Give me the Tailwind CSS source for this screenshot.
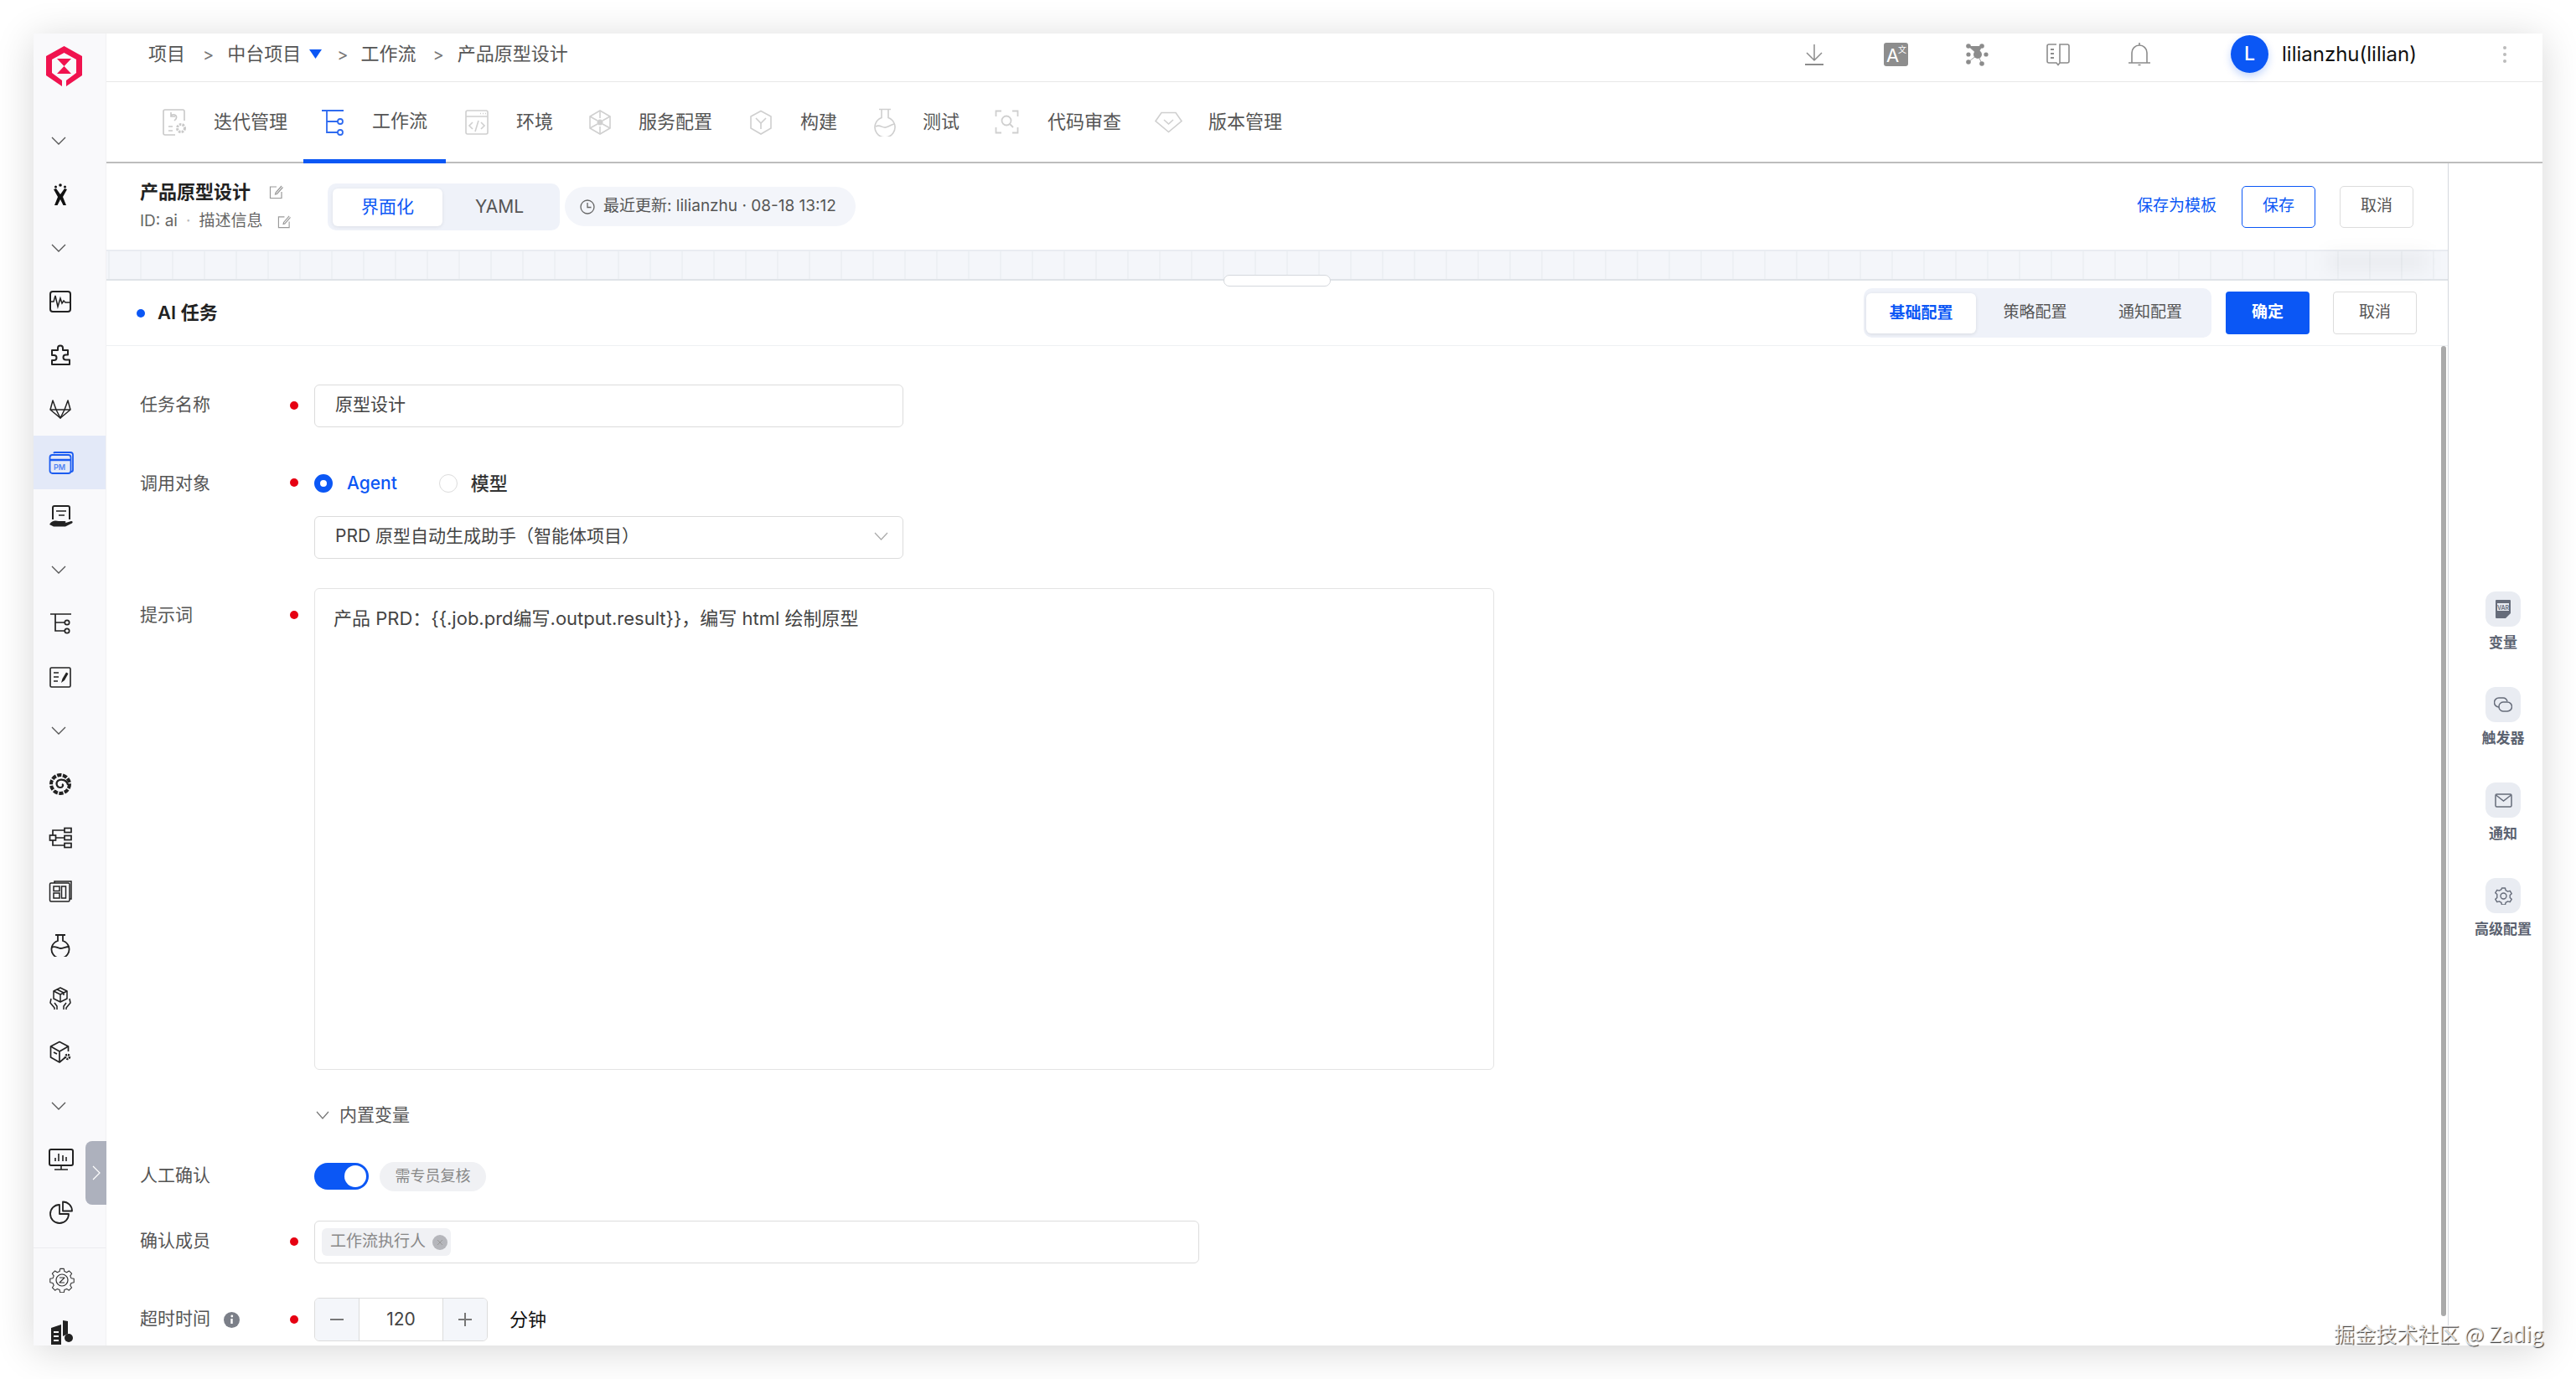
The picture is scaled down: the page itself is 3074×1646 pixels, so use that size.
<!DOCTYPE html>
<html lang="zh-CN">

<head>
    <meta charset="UTF-8">
    <title>产品原型设计 - 工作流</title>
    <script src="https://cdn.jsdelivr.net/npm/@tailwindcss/browser@4"></script>
</head>

<body class="bg-white h-[1646px] overflow-hidden pt-[40px] pl-[40px] font-['Inter','Noto_Sans_CJK_SC',sans-serif]">
    <div class="relative flex w-[2994px] h-[1566px] bg-white shadow-[0_6px_44px_rgba(0,0,0,0.16)]">

        <!-- Sidebar -->
        <aside class="relative w-[87px] shrink-0 bg-[#f9f9fb] border-r border-[#f1f1f3] flex flex-col overflow-hidden text-[#222]">
            <div class="h-[96px] shrink-0 pl-[15px] pt-[15px]">
                <svg class="w-[43px] h-[48px]" viewBox="0 0 43 48" fill="none">
                    <path d="M21.500 0 43 12V35L24 48V41L36 32V16L21.500 8 7 16V32L19 41V48L0 35V12Z" fill="#f0134f"/>
                    <path d="M13 15H30L21.500 24ZM21.500 24 30 33H13Z" fill="#f0134f"/>
                </svg>
            </div>
            <div class="flex flex-col">
                <div class="h-[64px] flex items-center pl-[21px]"><svg class="w-[18px] h-[10px]" viewBox="0 0 18 10" fill="none" stroke="#555" stroke-width="1.300"><path d="M1 1l8 8 8-8"/></svg></div>
                <div class="h-[64px] flex items-center pl-[18px]">
                    <svg class="w-[28px] h-[28px]" viewBox="0 0 28 28" fill="#111"><circle cx="14" cy="3" r="1.800"/><circle cx="8.500" cy="5" r="1.500"/><circle cx="19.500" cy="5" r="1.500"/><path d="M6 8l3-1 5 7 5-7 3 1-5 9 4 10h-3.500L14 20l-3.500 7H7l4-10Z"/></svg>
                </div>
                <div class="h-[64px] flex items-center pl-[21px]"><svg class="w-[18px] h-[10px]" viewBox="0 0 18 10" fill="none" stroke="#555" stroke-width="1.300"><path d="M1 1l8 8 8-8"/></svg></div>
                <div class="h-[64px] flex items-center pl-[18px]">
                    <svg class="w-[28px] h-[28px]" viewBox="0 0 28 28" fill="none" stroke="#222" stroke-width="2"><rect x="2" y="2" width="24" height="24" rx="3"/><path stroke-width="1.500" d="M2 14h4l2-7 3 13 3-10 2 6 2-3 2 2h6"/></svg>
                </div>
                <div class="h-[64px] flex items-center pl-[18px]">
                    <svg class="w-[28px] h-[28px]" viewBox="0 0 28 28" fill="none" stroke="#222" stroke-width="2" stroke-linejoin="round"><path d="M11 5.500a3 3 0 0 1 6 0V8h6v5.500h-2.500a3 3 0 0 0 0 6H25V25H4v-5h2.500a3 3 0 0 0 0-6H4V8h7Z"/></svg>
                </div>
                <div class="h-[64px] flex items-center pl-[18px]">
                    <svg class="w-[28px] h-[28px]" viewBox="0 0 28 28" fill="none" stroke="#222" stroke-width="1.500" stroke-linejoin="round"><path d="M14 25 2 15l3-11 4 11h10l4-11 3 11Z"/><path d="M9 15l5 10 5-10M2 15l7 0M19 15h7"/></svg>
                </div>
                <div class="h-[64px] flex items-center pl-[18px] bg-[#e3e9f8] text-[#0b57f5]">
                    <svg class="w-[30px] h-[28px]" viewBox="0 0 30 28" fill="none" stroke="#1c5cf0" stroke-width="1.800"><path d="M6 3a2 2 0 0 1 2-1h18a3 3 0 0 1 3 3v18a2 2 0 0 1-2 2"/><rect x="1.500" y="5" width="25" height="22" rx="3"/><path d="M2 11h24" stroke-width="2.500"/><text x="6" y="22.500" font-size="9" font-weight="600" fill="#4f82f2" stroke="none">PM</text></svg>
                </div>
                <div class="h-[64px] flex items-center pl-[18px]">
                    <svg class="w-[30px] h-[28px]" viewBox="0 0 30 28" fill="none" stroke="#222" stroke-width="2"><path d="M5 18V4a2 2 0 0 1 2-2h16a2 2 0 0 1 2 2v14"/><path d="M9 8h12M12 13h7" stroke-width="1.600"/><path d="M1 24c3-5 7-5 11-4h7c2 0 2 2 0 2.500l8-2.500c2 0 2 1.500 1 2.500l-8 4H6Z" fill="#222" stroke="none"/></svg>
                </div>
                <div class="h-[64px] flex items-center pl-[21px]"><svg class="w-[18px] h-[10px]" viewBox="0 0 18 10" fill="none" stroke="#555" stroke-width="1.300"><path d="M1 1l8 8 8-8"/></svg></div>
                <div class="h-[64px] flex items-center pl-[18px]">
                    <svg class="w-[28px] h-[28px]" viewBox="0 0 28 28" fill="none" stroke="#222" stroke-width="1.700"><path d="M2 3h25M8 3v20h11M8 13h11"/><circle cx="22" cy="13" r="2.700"/><circle cx="22" cy="23" r="2.700"/></svg>
                </div>
                <div class="h-[64px] flex items-center pl-[18px]">
                    <svg class="w-[28px] h-[28px]" viewBox="0 0 28 28" fill="none" stroke="#222" stroke-width="1.600"><rect x="2" y="3" width="24" height="23" rx="1.500"/><path d="M6 9h6M6 14h6M6 19h5"/><path d="M15 21l1.500-5L21 8.500l2.500 1.500-4.500 8Z" fill="#222" stroke="none"/></svg>
                </div>
                <div class="h-[64px] flex items-center pl-[21px]"><svg class="w-[18px] h-[10px]" viewBox="0 0 18 10" fill="none" stroke="#555" stroke-width="1.300"><path d="M1 1l8 8 8-8"/></svg></div>
                <div class="h-[64px] flex items-center pl-[17px]">
                    <svg class="w-[30px] h-[30px]" viewBox="0 0 30 30" fill="none"><circle cx="15" cy="15" r="10.500" stroke="#222" stroke-width="5" stroke-dasharray="5 1.500"/><circle cx="15" cy="15" r="9" fill="#f9f9fb"/><path d="M24 16c-1-6-8-8-12-5-3 3-1 8 3 8 3 0 4-3 2-4" stroke="#222" stroke-width="2.200"/></svg>
                </div>
                <div class="h-[64px] flex items-center pl-[18px]">
                    <svg class="w-[28px] h-[28px]" viewBox="0 0 28 28" fill="none" stroke="#222" stroke-width="1.700"><rect x="1.500" y="11" width="7" height="6"/><rect x="19" y="2.500" width="8" height="5"/><rect x="19" y="11.500" width="8" height="5"/><rect x="19" y="20.500" width="8" height="5"/><path d="M8.500 14H19M5 11V5h14M5 17v6h14"/></svg>
                </div>
                <div class="h-[64px] flex items-center pl-[18px]">
                    <svg class="w-[28px] h-[28px]" viewBox="0 0 28 28" fill="none" stroke="#222" stroke-width="1.500"><path d="M7 4V2h20v21h-2"/><rect x="1.500" y="4" width="23.500" height="22" rx="1.500"/><rect x="6" y="8" width="7" height="5.500"/><rect x="6" y="16" width="7" height="6"/><rect x="15.500" y="8" width="5" height="14"/></svg>
                </div>
                <div class="h-[64px] flex items-center pl-[18px]">
                    <svg class="w-[28px] h-[28px]" viewBox="0 0 28 28" fill="none" stroke="#222" stroke-width="1.800"><path d="M8 2h12M11 2v7a10.500 10.500 0 1 0 6 0V2"/><path d="M3.500 17c4-3 7 1 10.500 1s6-2 10.500-2" /></svg>
                </div>
                <div class="h-[64px] flex items-center pl-[18px]">
                    <svg class="w-[28px] h-[30px]" viewBox="0 0 28 30" fill="none" stroke="#222" stroke-width="1.500" stroke-linejoin="round"><path d="M14 2l8 4v9l-8 4-8-4V6Z"/><path d="M6 6l8 4 8-4M14 10v9M10 4l8 4v3"/><path d="M3 15l-1 5 5 6v2M25 15l1 5-5 6v2M7 20l3 4v4M21 20l-3 4v4"/></svg>
                </div>
                <div class="h-[64px] flex items-center pl-[18px]">
                    <svg class="w-[28px] h-[28px]" viewBox="0 0 28 28" fill="none" stroke="#222" stroke-width="1.700" stroke-linejoin="round"><path d="M20 21v-1l-7 6-10.500-6V7L13 1.500 23.500 7v6"/><path d="M2.500 7 13 13l10.500-6M13 13v13M6 14l4 2"/><circle cx="22.500" cy="19.500" r="2.500" stroke-width="2.500" stroke-dasharray="2 1"/></svg>
                </div>
                <div class="h-[64px] flex items-center pl-[21px]"><svg class="w-[18px] h-[10px]" viewBox="0 0 18 10" fill="none" stroke="#555" stroke-width="1.300"><path d="M1 1l8 8 8-8"/></svg></div>
                <div class="h-[63px] flex items-center pl-[18px]">
                    <svg class="w-[30px] h-[28px]" viewBox="0 0 30 28" fill="none" stroke="#222" stroke-width="2"><rect x="1" y="2" width="28" height="19" rx="2"/><path d="M15 21v5M7 26h16M8 16v-4M12 16V7M17 16v-7M21 16v-5" stroke-width="1.600"/></svg>
                </div>
                <div class="h-[64px] flex items-center pl-[18px]">
                    <svg class="w-[30px] h-[28px]" viewBox="0 0 30 28" fill="none" stroke="#222" stroke-width="1.800" stroke-linejoin="round"><path d="M13 5a11 11 0 1 0 11 11H13Z"/><path d="M17 1.500a11 11 0 0 1 11 11H17Z"/></svg>
                </div>
            </div>
            <div class="mt-[10px] border-t border-[#ececef] flex flex-col">
                <div class="h-[75px] flex items-center pl-[19px]">
                    <svg class="w-[30px] h-[30px]" viewBox="0 0 30 30" fill="none" stroke="#333" stroke-width="1.200" stroke-linejoin="round"><path d="M12.500 1.500h5l.7 3.600 3.100 1.300 3-2 3.600 3.600-2 3 1.300 3.100 3.600.7v5l-3.600.7-1.300 3.100 2 3-3.600 3.600-3-2-3.100 1.300-.7 3.600h-5l-.7-3.600-3.100-1.300-3 2-3.600-3.600 2-3-1.300-3.100-3.600-.7v-5l3.600-.7 1.300-3.100-2-3 3.600-3.600 3 2 3.100-1.300Z" transform="translate(1.500 0) scale(.9)"/><circle cx="15" cy="15" r="7"/><path d="M12 12h6l-6 6h6"/></svg>
                </div>
                <div class="h-[40px] pl-[20px] pt-[10px]">
                    <svg class="w-[28px] h-[30px]" viewBox="0 0 28 30" fill="#222"><path d="M1 10l12-4v24H1Zm3 4v2h6v-2Zm0 5v2h6v-2Zm0 5v2h6v-2Z"/><path d="M15 1l6 1v15l-6 3Z"/><circle cx="22" cy="22" r="5"/></svg>
                </div>
            </div>
        </aside>
        <button class="absolute left-[62px] top-[1322px] w-[25px] h-[76px] bg-[#adb1bd] rounded-l-lg flex items-center justify-center">
            <svg class="w-[10px] h-[18px]" viewBox="0 0 10 18" fill="none" stroke="#fff" stroke-width="1.200"><path d="M1 1l8 8-8 8"/></svg>
        </button>

        <!-- Main -->
        <div class="flex-1 flex flex-col min-w-0">
            <!-- Top bar -->
            <header class="h-[58px] shrink-0 border-b border-[#e8e8e8] flex items-center pl-[50px] pb-[8px] text-[22px] text-[#555]">
                <span>项目</span>
                <span class="ml-[21px] text-[20px] text-[#777]">&gt;</span>
                <span class="ml-[16px]">中台项目</span>
                <svg class="ml-[10px] w-[15px] h-[11px]" viewBox="0 0 15 11" fill="#0b57f5"><path d="M0 0h15L7.500 11Z"/></svg>
                <span class="ml-[18px] text-[20px] text-[#777]">&gt;</span>
                <span class="ml-[15px]">工作流</span>
                <span class="ml-[20px] text-[20px] text-[#777]">&gt;</span>
                <span class="ml-[16px]">产品原型设计</span>

                <div class="ml-auto flex items-center">
                    <svg class="w-[24px] h-[26px]" viewBox="0 0 24 26" fill="none" stroke="#8c8c8c" stroke-width="1.500"><path d="M12 1v19M3 11l9 9 9-9"/><path d="M1 25h22" stroke-width="2"/></svg>
                    <div class="ml-[71px] w-[29px] h-[28px] bg-[#8d8d8d] rounded-[3px] relative">
                        <span class="absolute left-[3px] top-[3px] text-[22px] leading-[24px] text-white">A</span>
                        <span class="absolute right-[2px] top-[3px] text-[10px] leading-[10px] text-white">文</span>
                    </div>
                    <svg class="ml-[68px] w-[28px] h-[28px]" viewBox="0 0 28 28" fill="#8c8c8c"><circle cx="15" cy="14" r="5"/><circle cx="4" cy="4" r="2.800"/><circle cx="20" cy="4" r="2.800"/><circle cx="25" cy="14" r="2.600"/><circle cx="4" cy="14" r="2.600"/><circle cx="4" cy="23" r="2.800"/><circle cx="20" cy="25" r="2.800"/><path d="M4 4l11 10 5-10M15 14l-11 9M15 14l5 11" stroke="#8c8c8c" stroke-width=".8"/></svg>
                    <svg class="ml-[68px] w-[30px] h-[28px]" viewBox="0 0 30 28" fill="none" stroke="#8c8c8c" stroke-width="1.600"><path d="M13 2H4a2 2 0 0 0-2 2v18a2 2 0 0 0 2 2h9l2 2.500 2-2.500h9a2 2 0 0 0 2-2V4a2 2 0 0 0-2-2H17v22"/><path d="M6 8h4M6 13h4M6 18h4" stroke-width="2"/></svg>
                    <svg class="ml-[68px] w-[28px] h-[30px]" viewBox="0 0 28 30" fill="none" stroke="#8c8c8c" stroke-width="1.600"><path d="M1 25h26M5 25V13a9 9 0 0 1 18 0v12M14 1v3M12.500 27.500h3"/></svg>
                    <div class="ml-[95px] w-[45px] h-[45px] rounded-full bg-[#0b57f5] text-white text-[23px] font-medium flex items-center justify-center shadow-[0_4px_10px_rgba(11,87,245,0.25)]">L</div>
                    <span class="ml-[16px] text-[24px] text-[#111] w-[159px] whitespace-nowrap">lilianzhu(lilian)</span>
                    <div class="ml-[105px] mr-[43px] flex flex-col gap-[4px]">
                        <i class="block w-[4px] h-[4px] rounded-full bg-[#bbb]"></i>
                        <i class="block w-[4px] h-[4px] rounded-full bg-[#bbb]"></i>
                        <i class="block w-[4px] h-[4px] rounded-full bg-[#bbb]"></i>
                    </div>
                </div>
            </header>

            <!-- Tabs -->
            <nav class="h-[97px] shrink-0 border-b-2 border-[#bdbdbd] flex items-stretch pl-[45px] text-[22px] text-[#555]">
                <a class="flex items-center px-[21px]">
                    <svg class="w-[30px] h-[32px]" viewBox="0 0 30 32" fill="none" stroke="#c9c9c9" stroke-width="1.600"><path d="M27 14V3a2 2 0 0 0-2-2H4a2 2 0 0 0-2 2v26a2 2 0 0 0 2 2h12"/><path d="M8 21h5M8 26h5M11 8c4-3 8 0 6 4l-2 2M11 4v5h5"/><circle cx="23" cy="23" r="4.500" stroke-width="3" stroke-dasharray="2.500 1.200"/></svg>
                    <span class="ml-[32px]">迭代管理</span>
                </a>
                <a class="flex items-center px-[21px] w-[170px] -ml-[2px] border-b-[5px] -mb-[2px] border-[#0b57f5]">
                    <svg class="w-[28px] h-[32px] mt-[4px]" viewBox="0 0 28 32" fill="none" stroke="#2f6bf0" stroke-width="1.800"><path d="M1 2h26M7 2v26h13M7 15h13"/><circle cx="23" cy="15" r="3"/><circle cx="23" cy="28" r="3"/></svg>
                    <span class="ml-[33px] whitespace-nowrap">工作流</span>
                </a>
                <a class="flex items-center px-[21px] ml-[2px]">
                    <svg class="w-[28px] h-[30px]" viewBox="0 0 28 30" fill="none" stroke="#cfcfcf" stroke-width="1.600"><rect x="1" y="1" width="26" height="28" rx="2"/><path d="M1 8h26M18 4.500h1M21 4.500h1M24 4.500h1M9 15l-4 4 4 4M19 15l4 4-4 4M16 13l-4 13"/></svg>
                    <span class="ml-[33px]">环境</span>
                </a>
                <a class="flex items-center px-[21px]">
                    <svg class="w-[28px] h-[32px]" viewBox="0 0 28 32" fill="none" stroke="#d0d0d0" stroke-width="1.600"><path d="M14 2 26 9v14l-12 7-12-7V9Z"/><path d="M14 2v9M2 9l9 5M26 9l-9 5M14 30v-9M2 23l9-5M26 23l-9-5"/><circle cx="14" cy="16" r="3.500" fill="#d0d0d0" stroke="none"/></svg>
                    <span class="ml-[32px]">服务配置</span>
                </a>
                <a class="flex items-center pl-[23px] pr-[21px]">
                    <svg class="w-[28px] h-[30px]" viewBox="0 0 28 30" fill="none" stroke="#cfcfcf" stroke-width="1.600"><path d="M14 1.500 26 8v14l-12 7-12-7V8Z"/><path d="M8 10l6 6 6-6M14 16v7"/></svg>
                    <span class="ml-[33px]">构建</span>
                </a>
                <a class="flex items-center pl-[23px] pr-[21px]">
                    <svg class="w-[26px] h-[34px]" viewBox="0 0 26 34" fill="none" stroke="#cfcfcf" stroke-width="1.600"><path d="M6 1.500h14M9 1.500v10a12 12 0 1 0 8 0v-10"/><path d="M2 22c5-3 8 2 12 1s6-3 10-4"/></svg>
                    <span class="ml-[32px]">测试</span>
                </a>
                <a class="flex items-center px-[21px]">
                    <svg class="w-[29px] h-[29px]" viewBox="0 0 29 29" fill="none" stroke="#cfcfcf" stroke-width="1.800"><path d="M8 1.500H1.500V8M21 1.500h6.500V8M8 27.500H1.500V21M21 27.500h6.500V21"/><circle cx="14" cy="13" r="5.500"/><path d="M18 17l4 4"/></svg>
                    <span class="ml-[34px]">代码审查</span>
                </a>
                <a class="flex items-center pl-[19px]">
                    <svg class="w-[33px] h-[26px]" viewBox="0 0 33 26" fill="none" stroke="#cfcfcf" stroke-width="1.600"><path d="M8 1.500h17l7 10-15.500 13L1 11.500Z"/><path d="M11 10l5.500 5 5.500-5"/></svg>
                    <span class="ml-[31px]">版本管理</span>
                </a>
            </nav>

            <div class="flex-1 flex min-h-0">
                <!-- Left pane -->
                <div class="relative w-[2794px] flex flex-col overflow-hidden">
                    <!-- Sub header -->
                    <section class="h-[103px] shrink-0 flex items-center pl-[40px] pr-[41px]">
                        <div class="w-[224px] shrink-0">
                            <div class="flex items-center h-[36px]">
                                <span class="text-[22px] font-semibold text-[#222]">产品原型设计</span>
                                <svg class="ml-[22px] w-[17px] h-[17px]" viewBox="0 0 17 17" fill="none" stroke="#999" stroke-width="1.200"><path d="M9 2H1.500v13.500H15V8M15 1 8 9l-.5 2 2-.5 7-8"/></svg>
                            </div>
                            <div class="flex items-center h-[34px] text-[19px] text-[#666]">
                                <span>ID: ai</span>
                                <span class="mx-[10px] text-[#bbb]">·</span>
                                <span>描述信息</span>
                                <svg class="ml-[18px] w-[16px] h-[16px]" viewBox="0 0 17 17" fill="none" stroke="#999" stroke-width="1.200"><path d="M9 2H1.500v13.500H15V8M15 1 8 9l-.5 2 2-.5 7-8"/></svg>
                            </div>
                        </div>
                        <div class="flex w-[277px] h-[56px] p-[6px] rounded-[10px] bg-[#eff2f9] text-[21px] shrink-0">
                            <div class="w-[131px] h-[45px] bg-white rounded-[6px] text-[#0b57f5] flex items-center justify-center shadow-[0_1px_4px_rgba(0,0,0,0.08)]">界面化</div>
                            <div class="flex-1 flex items-center justify-center pl-[2px] text-[#555]">YAML</div>
                        </div>
                        <div class="ml-[6px] w-[347px] h-[47px] rounded-full bg-[#f3f5fa] flex items-center pl-[18px] text-[19px] text-[#555] whitespace-nowrap">
                            <svg class="w-[18px] h-[18px]" viewBox="0 0 18 18" fill="none" stroke="#666" stroke-width="1.300"><circle cx="9" cy="9" r="8"/><path d="M9 4v5.500h4.500"/></svg>
                            <span class="ml-[10px]">最近更新: lilianzhu · 08-18 13:12</span>
                        </div>
                        <div class="ml-auto flex items-center">
                            <a class="text-[19px] text-[#0b57f5] whitespace-nowrap">保存为模板</a>
                            <button class="ml-[30px] w-[88px] h-[50px] rounded-[5px] border border-[#0b57f5] text-[19px] text-[#0b57f5]">保存</button>
                            <button class="ml-[29px] w-[88px] h-[50px] rounded-[5px] border border-[#dcdcdc] text-[19px] text-[#555]">取消</button>
                        </div>
                    </section>

                    <!-- Canvas strip -->
                    <div class="relative h-[37px] shrink-0 border-t-2 border-b-2 border-t-[#e9ecf1] border-b-[#dfe3e8] bg-[#f4f6fa] bg-[linear-gradient(to_right,#edf0f4_2px,transparent_2px)] bg-[length:38px_100%] bg-[position:2px_0]">
                        <div class="absolute left-[2650px] top-0 w-[120px] h-[24px] bg-black/[0.04] blur-[10px]"></div>
                        <div class="absolute left-[1333px] top-[28px] w-[128px] h-[14px] bg-white border border-[#d5d8dd] rounded-full"></div>
                    </div>

                    <!-- Task header -->
                    <section class="h-[78px] shrink-0 border-b border-[#eef0f3] bg-white flex items-center pl-[36px] pr-[37px]">
                        <i class="block w-[10px] h-[10px] rounded-full bg-[#0b57f5]"></i>
                        <span class="ml-[15px] text-[22px] font-semibold text-[#222]">AI 任务</span>
                        <div class="ml-auto flex w-[415px] h-[59px] p-[6px] pl-[3px] rounded-[10px] bg-[#eff2f9] text-[19px] text-[#555]">
                            <div class="w-[134px] h-[48px] bg-white rounded-[6px] text-[#0b57f5] font-semibold flex items-center justify-center shadow-[0_1px_4px_rgba(0,0,0,0.1)]">基础配置</div>
                            <div class="w-[144px] flex items-center justify-center">策略配置</div>
                            <div class="w-[137px] flex items-center justify-center">通知配置</div>
                        </div>
                        <button class="ml-[17px] w-[100px] h-[51px] rounded-[4px] bg-[#0b57f5] text-white text-[19px] font-semibold">确定</button>
                        <button class="ml-[28px] w-[100px] h-[51px] rounded-[4px] border border-[#dcdcdc] text-[19px] text-[#555]">取消</button>
                    </section>

                    <!-- Form -->
                    <form class="flex-1 pl-[40px] pt-[46px] text-[21px] text-[#555]">
                        <div class="flex items-center h-[51px]">
                            <label class="w-[179px] pb-[3px]">任务名称</label>
                            <i class="block w-[10px] h-[10px] rounded-full bg-[#e60012] mr-[19px] -mt-[2px]"></i>
                            <div class="w-[703px] h-[51px] border border-[#dcdcdc] rounded-[6px] flex items-center pl-[24px] pb-[3px] text-[#444]">原型设计</div>
                        </div>
                        <div class="flex items-center h-[32px] mt-[51px]">
                            <label class="w-[179px]">调用对象</label>
                            <i class="block w-[10px] h-[10px] rounded-full bg-[#e60012] mr-[19px] -mt-[2px]"></i>
                            <span class="w-[22px] h-[22px] rounded-full border-[7px] border-[#0b57f5] bg-white"></span>
                            <span class="ml-[17px] text-[#0b57f5] font-medium">Agent</span>
                            <span class="ml-[50px] w-[22px] h-[22px] rounded-full border border-[#dcdcdc] bg-white"></span>
                            <span class="ml-[16px] text-[22px] text-[#333] font-medium">模型</span>
                        </div>
                        <div class="ml-[208px] mt-[23px] w-[703px] h-[51px] border border-[#dcdcdc] rounded-[6px] flex items-center pl-[24px] pr-[17px] pb-[3px] text-[#444]">
                            <span>PRD 原型自动生成助手（智能体项目）</span>
                            <svg class="ml-auto w-[17px] h-[10px]" viewBox="0 0 17 10" fill="none" stroke="#aaa" stroke-width="1.200"><path d="M1 1l7.500 8L16 1"/></svg>
                        </div>
                        <div class="flex mt-[35px] h-[575px]">
                            <label class="w-[179px] pt-[17px] leading-[30px]">提示词</label>
                            <i class="block w-[10px] h-[10px] rounded-full bg-[#e60012] mr-[19px] mt-[27px]"></i>
                            <div class="w-[1408px] border border-[#e4e4e4] rounded-[6px] pl-[22px] pt-[20px] text-[22px] leading-[30px] text-[#444]">产品 PRD：{{.job.prd编写.output.result}}，编写 html 绘制原型</div>
                        </div>
                        <div class="flex items-center ml-[208px] mt-[40px] h-[30px] pb-[2px] text-[#555]">
                            <svg class="ml-[2px] w-[16px] h-[10px]" viewBox="0 0 16 10" fill="none" stroke="#777" stroke-width="1.200"><path d="M1 1l7 8 7-8"/></svg>
                            <span class="ml-[12px]">内置变量</span>
                        </div>
                        <div class="flex items-center h-[36px] mt-[39px]">
                            <label class="w-[208px] pb-[3px]">人工确认</label>
                            <div class="w-[65px] h-[32px] rounded-full bg-[#0b57f5] relative -mt-[1px]">
                                <i class="absolute right-[3px] top-[3px] block w-[26px] h-[26px] rounded-full bg-white"></i>
                            </div>
                            <span class="ml-[13px] w-[127px] h-[35px] rounded-full bg-[#f0f1f4] flex items-center justify-center pb-[2px] text-[18px] text-[#888]">需专员复核</span>
                        </div>
                        <div class="flex items-center h-[51px] mt-[35px]">
                            <label class="w-[179px] pb-[3px]">确认成员</label>
                            <i class="block w-[10px] h-[10px] rounded-full bg-[#e60012] mr-[19px] -mt-[2px]"></i>
                            <div class="w-[1056px] h-[51px] border border-[#dcdcdc] rounded-[6px] flex items-center pl-[8px]">
                                <span class="w-[154px] h-[33px] rounded-[6px] bg-[#f0f1f4] flex items-center pl-[10px] text-[19px] text-[#888] whitespace-nowrap">
                                    工作流执行人
                                    <i class="ml-[8px] w-[18px] h-[18px] rounded-full bg-[#b5b6bb] flex items-center justify-center">
                                        <svg class="w-[8px] h-[8px]" viewBox="0 0 8 8" stroke="#999" stroke-width="1"><path d="M1 1l6 6M7 1 1 7"/></svg>
                                    </i>
                                </span>
                            </div>
                        </div>
                        <div class="flex items-center h-[52px] mt-[41px]">
                            <label class="w-[100px] pb-[2px]">超时时间</label>
                            <svg class="w-[19px] h-[19px] mr-[60px]" viewBox="0 0 19 19"><circle cx="9.500" cy="9.500" r="9.500" fill="#7b7f88"/><path d="M9.500 8v6" stroke="#fff" stroke-width="2.400"/><circle cx="9.800" cy="5" r="1.400" fill="#fff"/></svg>
                            <i class="block w-[10px] h-[10px] rounded-full bg-[#e60012] mr-[19px]"></i>
                            <div class="w-[207px] h-[52px] border border-[#dcdcdc] rounded-[6px] flex overflow-hidden">
                                <div class="w-[53px] bg-[#f4f6fa] border-r border-[#dcdcdc] flex items-center justify-center">
                                    <svg class="w-[16px] h-[2px]" viewBox="0 0 16 2" fill="#777"><rect width="16" height="2"/></svg>
                                </div>
                                <div class="flex-1 flex items-center justify-center text-[#444]">120</div>
                                <div class="w-[53px] bg-[#f4f6fa] border-l border-[#dcdcdc] flex items-center justify-center">
                                    <svg class="w-[16px] h-[16px]" viewBox="0 0 16 16" fill="#777"><path d="M7 0h2v7h7v2H9v7H7V9H0V7h7Z"/></svg>
                                </div>
                            </div>
                            <span class="ml-[26px] text-[22px] text-[#111]">分钟</span>
                        </div>
                    </form>

                    <!-- Scrollbar -->
                    <div class="absolute right-[2px] top-[218px] w-[6px] h-[1158px] rounded-full bg-[#aaaaaa]"></div>
                </div>

                <!-- Right panel -->
                <aside class="flex-1 border-l border-[#d5d8dd] flex flex-col items-center pt-[511px] pl-[18px] text-[17px] font-semibold text-[#5b6270]">
                    <div class="flex flex-col items-center h-[114px]">
                        <div class="w-[42px] h-[42px] rounded-[12px] bg-[#e9ecf2] flex items-center justify-center">
                            <svg class="w-[20px] h-[24px]" viewBox="0 0 20 24"><path d="M2 1h16a1 1 0 0 1 1 1v15l-6 6H2a1 1 0 0 1-1-1V2a1 1 0 0 1 1-1Z" fill="#666c7a"/><rect x="3" y="5" width="14" height="9" fill="#e9ecf2"/><text x="10" y="12.500" text-anchor="middle" font-size="7" font-weight="600" fill="#666c7a">VAR</text></svg>
                        </div>
                        <span class="mt-[7px] leading-[24px]">变量</span>
                    </div>
                    <div class="flex flex-col items-center h-[114px]">
                        <div class="w-[42px] h-[42px] rounded-[12px] bg-[#e9ecf2] flex items-center justify-center">
                            <svg class="w-[22px] h-[20px]" viewBox="0 0 22 20" fill="none" stroke="#666c7a" stroke-width="1.500"><path d="M6 13a5.500 5.500 0 0 1 0-11h5a5.500 5.500 0 0 1 5 4"/><path d="M16 7a5.500 5.500 0 0 1 0 11h-5a5.500 5.500 0 0 1-5-5.500A5.500 5.500 0 0 1 11 7h5"/></svg>
                        </div>
                        <span class="mt-[7px] leading-[24px]">触发器</span>
                    </div>
                    <div class="flex flex-col items-center h-[114px]">
                        <div class="w-[42px] h-[42px] rounded-[12px] bg-[#e9ecf2] flex items-center justify-center">
                            <svg class="w-[21px] h-[17px]" viewBox="0 0 21 17" fill="none" stroke="#666c7a" stroke-width="1.500"><rect x="1" y="1" width="19" height="15" rx="1.500"/><path d="M1.500 2l9 7 9-7"/></svg>
                        </div>
                        <span class="mt-[7px] leading-[24px]">通知</span>
                    </div>
                    <div class="flex flex-col items-center h-[114px]">
                        <div class="w-[42px] h-[42px] rounded-[12px] bg-[#e9ecf2] flex items-center justify-center">
                            <svg class="w-[21px] h-[21px]" viewBox="0 0 21 21" fill="none" stroke="#666c7a" stroke-width="1.400" stroke-linejoin="round"><path d="M8.500 1h4l.6 2.700 2.500 1.400 2.600-.8 2 3.400-2 1.900v2.800l2 1.900-2 3.400-2.600-.8-2.500 1.400-.6 2.700h-4l-.6-2.700-2.500-1.400-2.600.8-2-3.400 2-1.900V8.600l-2-1.900 2-3.400 2.600.8 2.500-1.400Z"/><circle cx="10.500" cy="10.500" r="3.500"/></svg>
                        </div>
                        <span class="mt-[7px] leading-[24px] whitespace-nowrap">高级配置</span>
                    </div>
                </aside>
            </div>
        </div>

        <!-- Watermark -->
        <span class="absolute right-[-1px] bottom-[0px] text-[25px] leading-[30px] text-white/80 [text-shadow:1px_1px_1px_#333] whitespace-nowrap font-['Noto_Sans_CJK_SC',sans-serif]">掘金技术社区 @ Zadig</span>
    </div>
</body>

</html>
